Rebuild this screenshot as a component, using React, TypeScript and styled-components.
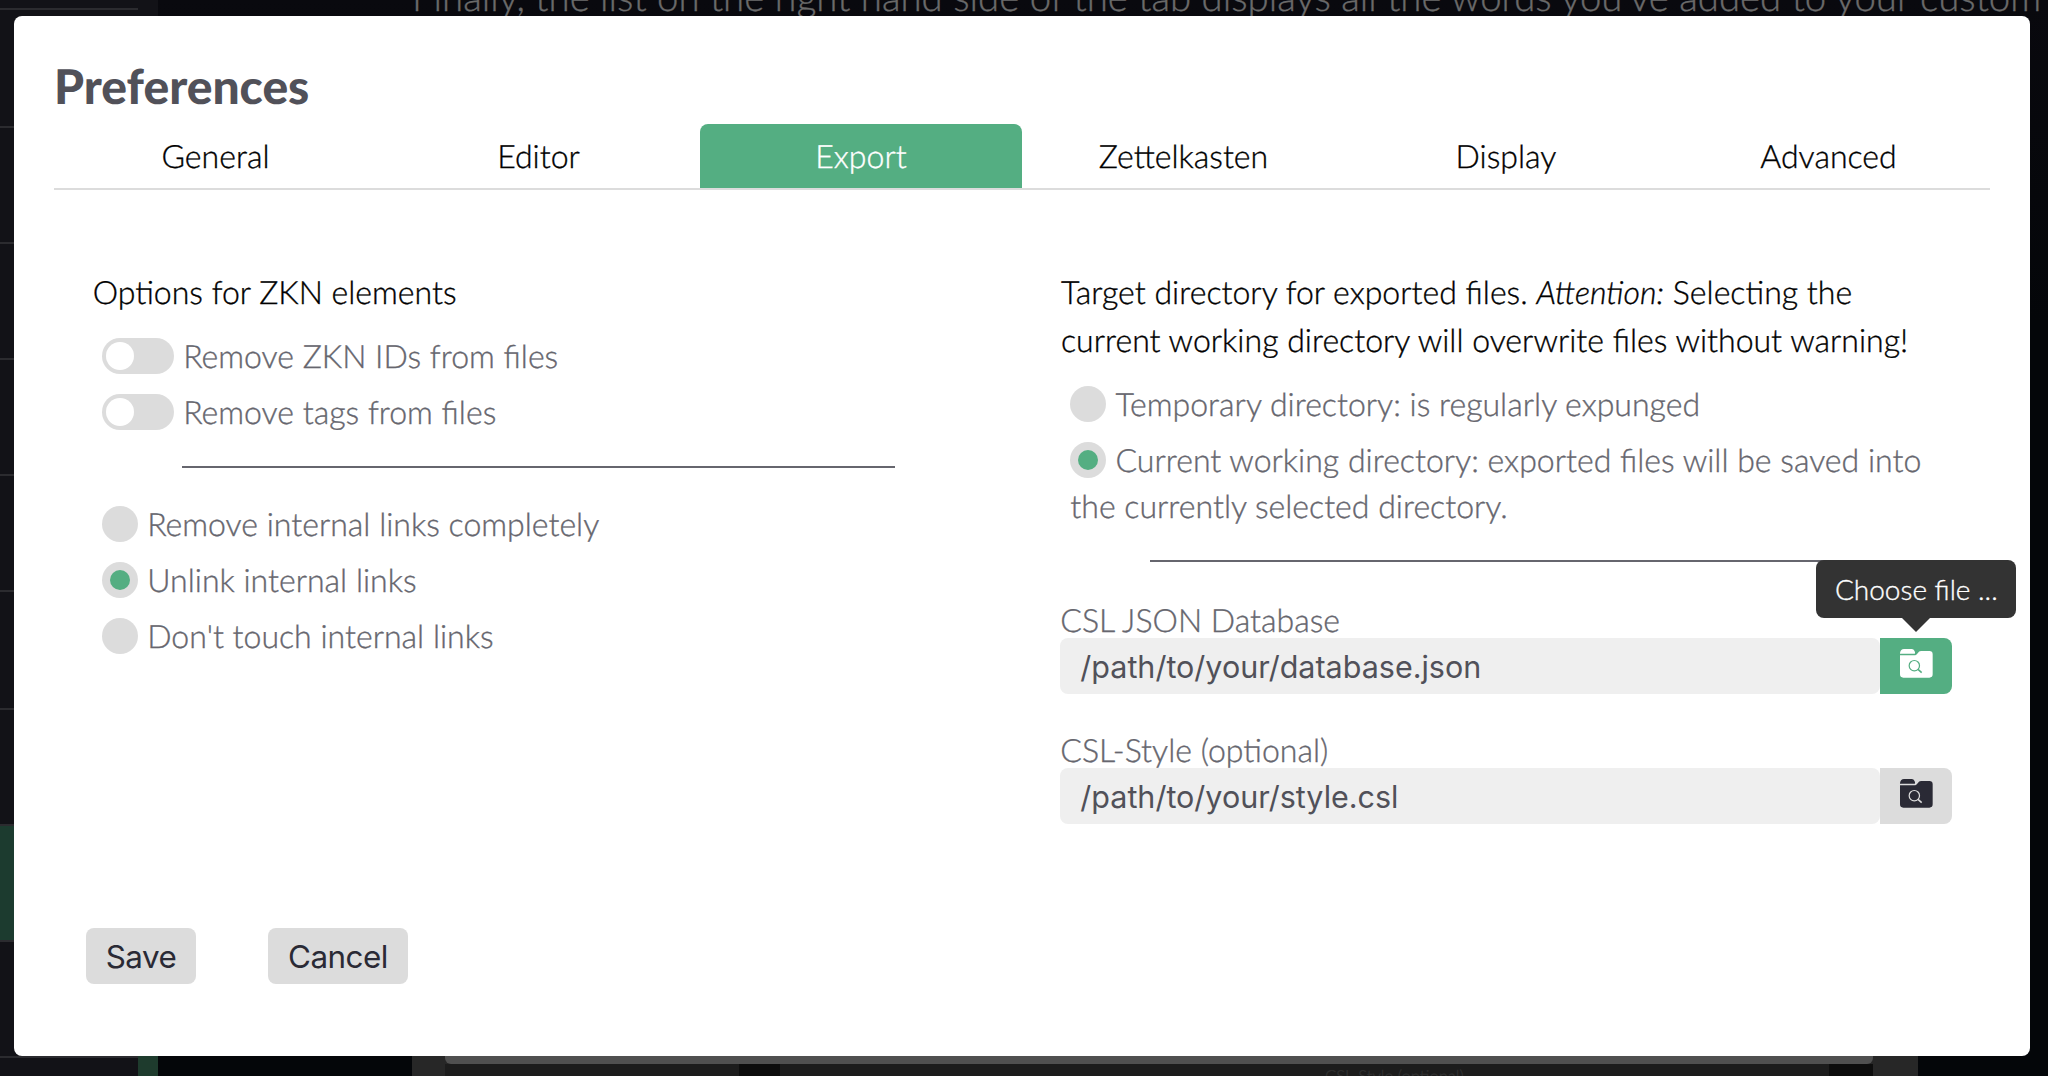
import React, { useState } from "react";
import styled, { createGlobalStyle, css } from "styled-components";

const color = {
  green: "#54ae82",
  control: "#dcdcdc",
  field: "#efefef",
  ink: "#2a2a35",
  heading: "#515159",
  label: "#66666e",
};

const Global = createGlobalStyle`
  * { box-sizing: border-box; }
  html, body { margin: 0; padding: 0; background: #050609; overflow: hidden; }
  body {
    font-family: Lato, "Open Sans", sans-serif;
    font-weight: 300;
    font-size: 32.06px;
    color: #000;
    text-rendering: geometricPrecision;
    -webkit-text-stroke: 0.35px currentColor;
  }
`;

const Screen = styled.div`
  display: grid;
  grid-template: 1076px / 2048px;
  overflow: hidden;
  & > * { grid-area: 1 / 1; }
`;

/* ---------- dimmed application behind the dialog ---------- */
const Backdrop = styled.div`
  display: flex;
  min-width: 0;
  overflow: hidden;
`;

const FileList = styled.div`
  width: 138px;
  flex: none;
  background: #121217;
`;

const FileRow = styled.div<{ $h: number; $active?: boolean }>`
  height: ${(p) => p.$h}px;
  border-bottom: 2px solid #2b2b2f;
  background: ${(p) => (p.$active ? "#1c3b2f" : "transparent")};
`;

const Scroller = styled.div`
  width: 20px;
  flex: none;
  display: flex;
  flex-direction: column;
  justify-content: flex-end;
  background: #121217;
`;

const Thumb = styled.div`
  height: 20px;
  background: #1e3b2d;
`;

const EditorPane = styled.div`
  flex: 1;
  min-width: 0;
  display: flex;
  flex-direction: column;
  justify-content: space-between;
  background: linear-gradient(#09090e, #040609 30%);
`;

const EditorLine = styled.p`
  margin: -28px 0 0 254px;
  font-size: 38.4px;
  line-height: 50px;
  white-space: nowrap;
  color: #6a6a6a;
`;

const Figure = styled.div`
  width: 1506px;
  height: 20px;
  margin-left: 254px;
  padding: 0 45px 0 33px;
  background: #272727;
  overflow: hidden;
`;

const FigureEdge = styled.div`
  height: 8px;
  border-radius: 0 0 6px 6px;
  background: #505050;
`;

const FigureBody = styled.div`
  display: flex;
  height: 12px;
  background: #1c1c1c;
`;

const FigureBlock = styled.div<{ $w: number; $dark?: boolean }>`
  width: ${(p) => p.$w}px;
  flex: none;
  background: ${(p) => (p.$dark ? "#0d0d0d" : "transparent")};
`;

const FigureLabel = styled.span`
  flex: 1;
  padding-left: 545px;
  font-size: 16.6px;
  line-height: 24px;
  white-space: nowrap;
  color: #303030;
`;

/* ---------- dialog ---------- */
const Dialog = styled.section`
  display: flex;
  flex-direction: column;
  width: 2016px;
  height: 1040px;
  margin: 16px 0 0 14px;
  padding: 40px 40px 0;
  border-radius: 8px;
  background: #fff;
  z-index: 1;
`;

const Title = styled.h1`
  margin: 0;
  height: 68px;
  font-size: 48px;
  line-height: 62px;
  font-weight: 900;
  color: ${color.heading};
  -webkit-text-stroke: 0;
`;

const TabBar = styled.nav`
  display: grid;
  grid-template-columns: 323px 323px 322px 323px 322px 323px;
  height: 66px;
  border-bottom: 2px solid ${color.control};
`;

const Tab = styled.a<{ $active: boolean }>`
  text-align: center;
  line-height: 64px;
  cursor: pointer;
  ${(p) =>
    p.$active &&
    css`
      border-radius: 8px 8px 0 0;
      background: ${color.green};
      color: #fff;
    `}
`;

const Columns = styled.div`
  display: grid;
  grid-template-columns: 968.3px 967.7px;
  height: 738px;
`;

const Column = styled.div`
  padding: 78px 38.7px 0;
`;

const Intro = styled.p`
  margin: 0 0 17px;
  line-height: 48px;
`;

const Option = styled.label`
  display: block;
  margin-bottom: 10px;
  padding-left: 9.3px;
  line-height: 46px;
  color: ${color.label};
  cursor: pointer;
`;

const Switch = styled.span<{ $on?: boolean }>`
  display: inline-block;
  width: 72px;
  height: 36px;
  margin-right: 9.2px;
  padding: 4px;
  vertical-align: -6px;
  border-radius: 18px;
  background: ${(p) => (p.$on ? color.green : color.control)};
  &::after {
    content: "";
    display: block;
    width: 28px;
    height: 28px;
    border-radius: 50%;
    background: #fff;
  }
`;

const Radio = styled.span<{ $on: boolean }>`
  display: inline-block;
  width: 36px;
  height: 36px;
  margin-right: 9.2px;
  padding: 8px;
  vertical-align: -6px;
  border-radius: 50%;
  background: ${color.control};
  &::after {
    content: "";
    display: block;
    width: 20px;
    height: 20px;
    border-radius: 50%;
    background: ${(p) => (p.$on ? color.green : "transparent")};
  }
`;

const Rule = styled.hr<{ $gap?: number }>`
  width: 80%;
  height: 2px;
  margin: 31px auto ${(p) => p.$gap ?? 33}px;
  border: 0;
  background: #66666e;
`;

const Field = styled.div`
  display: grid;
  grid-template-columns: 1fr 72px;
  width: 892px;
  margin: 0 0 36px -0.7px;
`;

const FieldLabel = styled.label`
  grid-column: 1 / -1;
  height: 38px;
  line-height: 40px;
  color: ${color.label};
`;

const PathInput = styled.input`
  min-width: 0;
  height: 56px;
  padding: 0 20px;
  border: 0;
  border-radius: 8px;
  outline: 0;
  background: ${color.field};
  font: 400 30.5px Inter, sans-serif;
  color: ${color.heading};
  -webkit-text-stroke: 0;
`;

const BrowseButton = styled.button<{ $hover?: boolean }>`
  position: relative;
  display: flex;
  justify-content: center;
  height: 56px;
  padding: 11px 0 0;
  border: 0;
  border-radius: 0 8px 8px 0;
  background: ${(p) => (p.$hover ? color.green : color.control)};
  color: ${(p) => (p.$hover ? "#fff" : color.ink)};
  --cut: ${(p) => (p.$hover ? color.green : color.control)};
`;

const Tooltip = styled.span`
  position: absolute;
  left: 50%;
  bottom: 76px;
  width: 200px;
  height: 58px;
  margin-left: -100px;
  border-radius: 8px;
  background: #333;
  color: #fff;
  font: 300 28px/58px Lato, sans-serif;
  text-align: center;
  white-space: nowrap;
  &::after {
    content: "";
    position: absolute;
    top: 100%;
    left: 50%;
    margin-left: -14px;
    border: 14px solid transparent;
    border-top-color: #333;
    border-bottom: 0;
  }
`;

const Actions = styled.footer`
  display: flex;
  gap: 72px;
  padding-left: 32px;
`;

const ActionButton = styled.button<{ $w: number }>`
  width: ${(p) => p.$w}px;
  height: 56px;
  padding: 1px 0 0;
  border: 0;
  border-radius: 8px;
  background: ${color.control};
  color: ${color.ink};
  font: 400 31.4px Inter, sans-serif;
  letter-spacing: -0.5px;
  -webkit-text-stroke: 0;
`;

const FolderSearch = () => (
  <svg width="33" height="29" viewBox="0 0 99 87">
    <path
      fill="currentColor"
      d="M0 14.5V12Q2 0 12 0H36Q42 0 45 9Q46 14.5 44 14.5ZM0 18.5H46Q50 18.5 53 13Q57 6 63 6H88Q98 6 98 16V76Q98 86 88 86H10Q0 86 0 76Z"
    />
    <circle cx="43" cy="50" r="15.5" fill="none" stroke="var(--cut)" strokeWidth="3.6" />
    <path d="M54 61L65 71" stroke="var(--cut)" strokeWidth="4.5" />
  </svg>
);

const rows = [10, 118, 116, 116, 116, 116, 118, 116, 116, 116];
const tabs = ["General", "Editor", "Export", "Zettelkasten", "Display", "Advanced"];
const linkModes = ["Remove internal links completely", "Unlink internal links", "Don't touch internal links"];
const targets = [
  "Temporary directory: is regularly expunged",
  "Current working directory: exported files will be saved into the currently selected directory.",
];

export default function App() {
  const [tab, setTab] = useState("Export");
  const [linkMode, setLinkMode] = useState(1);
  const [target, setTarget] = useState(1);

  return (
    <Screen>
      <Global />
      <Backdrop>
        <FileList>
          {rows.map((h, i) => (
            <FileRow key={i} $h={h} $active={i === 8} />
          ))}
        </FileList>
        <Scroller>
          <Thumb />
        </Scroller>
        <EditorPane>
          <EditorLine>
            Finally, the list on the right hand side of the tab displays all the words you've added to your custom
          </EditorLine>
          <Figure>
            <FigureEdge />
            <FigureBody>
              <FigureBlock $w={294} />
              <FigureBlock $w={41} $dark />
              <FigureLabel>CSL-Style (optional)</FigureLabel>
              <FigureBlock $w={44} $dark />
            </FigureBody>
          </Figure>
        </EditorPane>
      </Backdrop>

      <Dialog>
        <Title>Preferences</Title>
        <TabBar>
          {tabs.map((t) => (
            <Tab key={t} $active={t === tab} onClick={() => setTab(t)}>
              {t}
            </Tab>
          ))}
        </TabBar>
        <Columns>
          <Column>
            <Intro>Options for ZKN elements</Intro>
            <Option>
              <Switch />
              Remove ZKN IDs from files
            </Option>
            <Option>
              <Switch />
              Remove tags from files
            </Option>
            <Rule />
            {linkModes.map((m, i) => (
              <Option key={m} onClick={() => setLinkMode(i)}>
                <Radio $on={i === linkMode} />
                {m}
              </Option>
            ))}
          </Column>
          <Column>
            <Intro>
              Target directory for exported files. <em>Attention:</em> Selecting the current working directory will
              overwrite files without warning!
            </Intro>
            {targets.map((m, i) => (
              <Option key={m} onClick={() => setTarget(i)}>
                <Radio $on={i === target} />
                {m}
              </Option>
            ))}
            <Rule $gap={38} />
            <Field>
              <FieldLabel>CSL JSON Database</FieldLabel>
              <PathInput defaultValue="/path/to/your/database.json" />
              <BrowseButton $hover>
                <FolderSearch />
                <Tooltip>Choose file ...</Tooltip>
              </BrowseButton>
            </Field>
            <Field>
              <FieldLabel>CSL-Style (optional)</FieldLabel>
              <PathInput defaultValue="/path/to/your/style.csl" />
              <BrowseButton>
                <FolderSearch />
              </BrowseButton>
            </Field>
          </Column>
        </Columns>
        <Actions>
          <ActionButton $w={110}>Save</ActionButton>
          <ActionButton $w={140}>Cancel</ActionButton>
        </Actions>
      </Dialog>
    </Screen>
  );
}
